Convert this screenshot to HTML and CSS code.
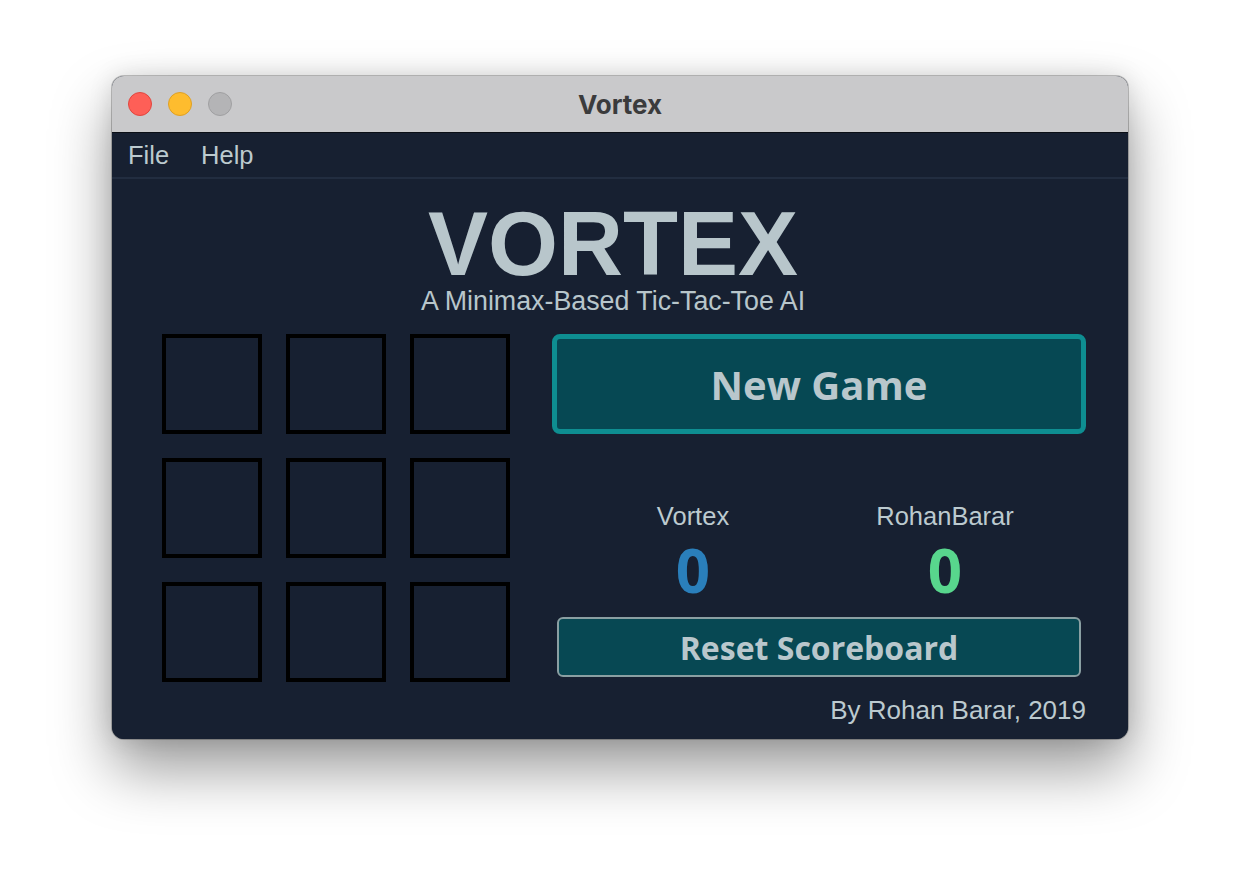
FILE: index.html
```html
<!DOCTYPE html>
<html>
<head>
<meta charset="utf-8">
<title>Vortex</title>
<link rel="stylesheet" href="styles.css">
</head>
<body>
<div class="window">
  <div class="titlebar">
    <div class="lights">
      <span class="light red"></span>
      <span class="light yellow"></span>
      <span class="light gray"></span>
    </div>
    <div class="title">Vortex</div>
  </div>
  <div class="menubar">
    <span class="menu-item">File</span>
    <span class="menu-item">Help</span>
  </div>
  <div class="content">
    <div class="heading">
      <h1 class="logo">VORTEX</h1>
      <p class="subtitle">A Minimax-Based Tic-Tac-Toe AI</p>
    </div>
    <div class="main">
      <div class="board">
        <div class="cell"></div><div class="cell"></div><div class="cell"></div>
        <div class="cell"></div><div class="cell"></div><div class="cell"></div>
        <div class="cell"></div><div class="cell"></div><div class="cell"></div>
      </div>
      <div class="side">
        <button class="new-game">New Game</button>
        <div class="scores">
          <div class="player">
            <div class="name">Vortex</div>
            <div class="score ai">0</div>
          </div>
          <div class="player">
            <div class="name">RohanBarar</div>
            <div class="score human">0</div>
          </div>
        </div>
        <button class="reset">Reset Scoreboard</button>
        <div class="credit">By Rohan Barar, 2019</div>
      </div>
    </div>
  </div>
</div>
</body>
</html>
```
FILE: styles.css
```css
* { box-sizing: border-box; }
html, body { margin: 0; padding: 0; background: #ffffff; }
body {
  padding: 76px 0 0 112px;
  height: 888px;
  overflow: hidden;
  font-family: "Liberation Sans", Arial, sans-serif;
}
.window {
  width: 1016px;
  height: 663px;
  border-radius: 12px;
  overflow: hidden;
  background: #172031;
  box-shadow: 0 0 0 1px rgba(0,0,0,0.22), 0 30px 60px rgba(0,0,0,0.4), 0 0 24px rgba(0,0,0,0.12);
  display: flex;
  flex-direction: column;
}
.titlebar {
  height: 57px;
  background: #c9c9cb;
  border-bottom: 1px solid #0b0f16;
  display: flex;
  align-items: center;
  position: relative;
  flex: none;
}
.lights {
  display: flex;
  gap: 16px;
  padding-left: 16px;
}
.light {
  width: 24px;
  height: 24px;
  border-radius: 50%;
  display: block;
}
.light.red { background: #fe5f57; border: 1px solid #e1463f; }
.light.yellow { background: #febc2e; border: 1px solid #dfa024; }
.light.gray { background: #b4b4b6; border: 1px solid #a0a0a2; }
.title {
  position: absolute;
  left: 0;
  right: 0;
  top: 0;
  bottom: 0;
  display: flex;
  align-items: center;
  justify-content: center;
  font-family: Inter, "Liberation Sans", sans-serif;
  font-weight: 700;
  font-size: 26px;
  color: #3b3b3c;
  padding-left: 0;
}
.menubar {
  height: 46px;
  flex: none;
  display: flex;
  align-items: center;
  gap: 32px;
  padding: 0 0 0 16px;
  border-bottom: 2px solid #222d40;
  background: #172031;
}
.menu-item {
  font-size: 25.5px;
  color: #bccacf;
}
.content {
  flex: 1;
  background: #172031;
  padding-top: 22px;
  color: #b8c6cb;
}
.heading {
  padding-right: 14px;
  text-align: center;
}
.logo {
  margin: 0;
  font-family: "Liberation Sans", Arial, sans-serif;
  font-weight: 700;
  font-size: 90px;
  line-height: 86px;
  color: #b8c6cb;
}
.subtitle {
  margin: 0;
  font-size: 26.8px;
  line-height: 28px;
  color: #b8c6cb;
}
.main {
  display: flex;
  gap: 42px;
  padding: 0 42px 0 50px;
  margin-top: 19px;
}
.board {
  display: grid;
  grid-template-columns: repeat(3, 100px);
  grid-auto-rows: 100px;
  gap: 24px;
  flex: none;
}
.cell {
  border: 4px solid #000;
}
.side {
  flex: 1;
  display: flex;
  flex-direction: column;
}
.new-game {
  height: 100px;
  border: 5px solid #0e8e91;
  border-radius: 8px;
  background: #064853;
  color: #b9c7cc;
  font-family: "Open Sans", "Liberation Sans", sans-serif;
  font-weight: 700;
  font-size: 40px;
  padding: 0;
  margin: 0;
}
.scores {
  display: grid;
  grid-template-columns: 252px 252px;
  justify-content: center;
  margin-top: 67px;
}
.player {
  display: flex;
  flex-direction: column;
  align-items: center;
}
.name {
  font-size: 25.5px;
  line-height: 30px;
  color: #bccacf;
}
.score {
  margin-top: 12px;
  font-family: "Open Sans", "Liberation Sans", sans-serif;
  font-weight: 700;
  font-size: 60px;
  line-height: 54px;
}
.score.ai { color: #2a7fbb; }
.score.human { color: #58d68d; }
.reset {
  margin: 20px 5px 0;
  height: 60px;
  border: 2px solid #8a9fa2;
  border-radius: 6px;
  background: #074853;
  color: #b9c7cc;
  font-family: "Open Sans", "Liberation Sans", sans-serif;
  font-weight: 700;
  font-size: 32px;
  padding: 0;
}
.credit {
  margin-top: 18px;
  text-align: right;
  font-size: 26px;
  line-height: 30px;
  color: #bccacf;
}
```
